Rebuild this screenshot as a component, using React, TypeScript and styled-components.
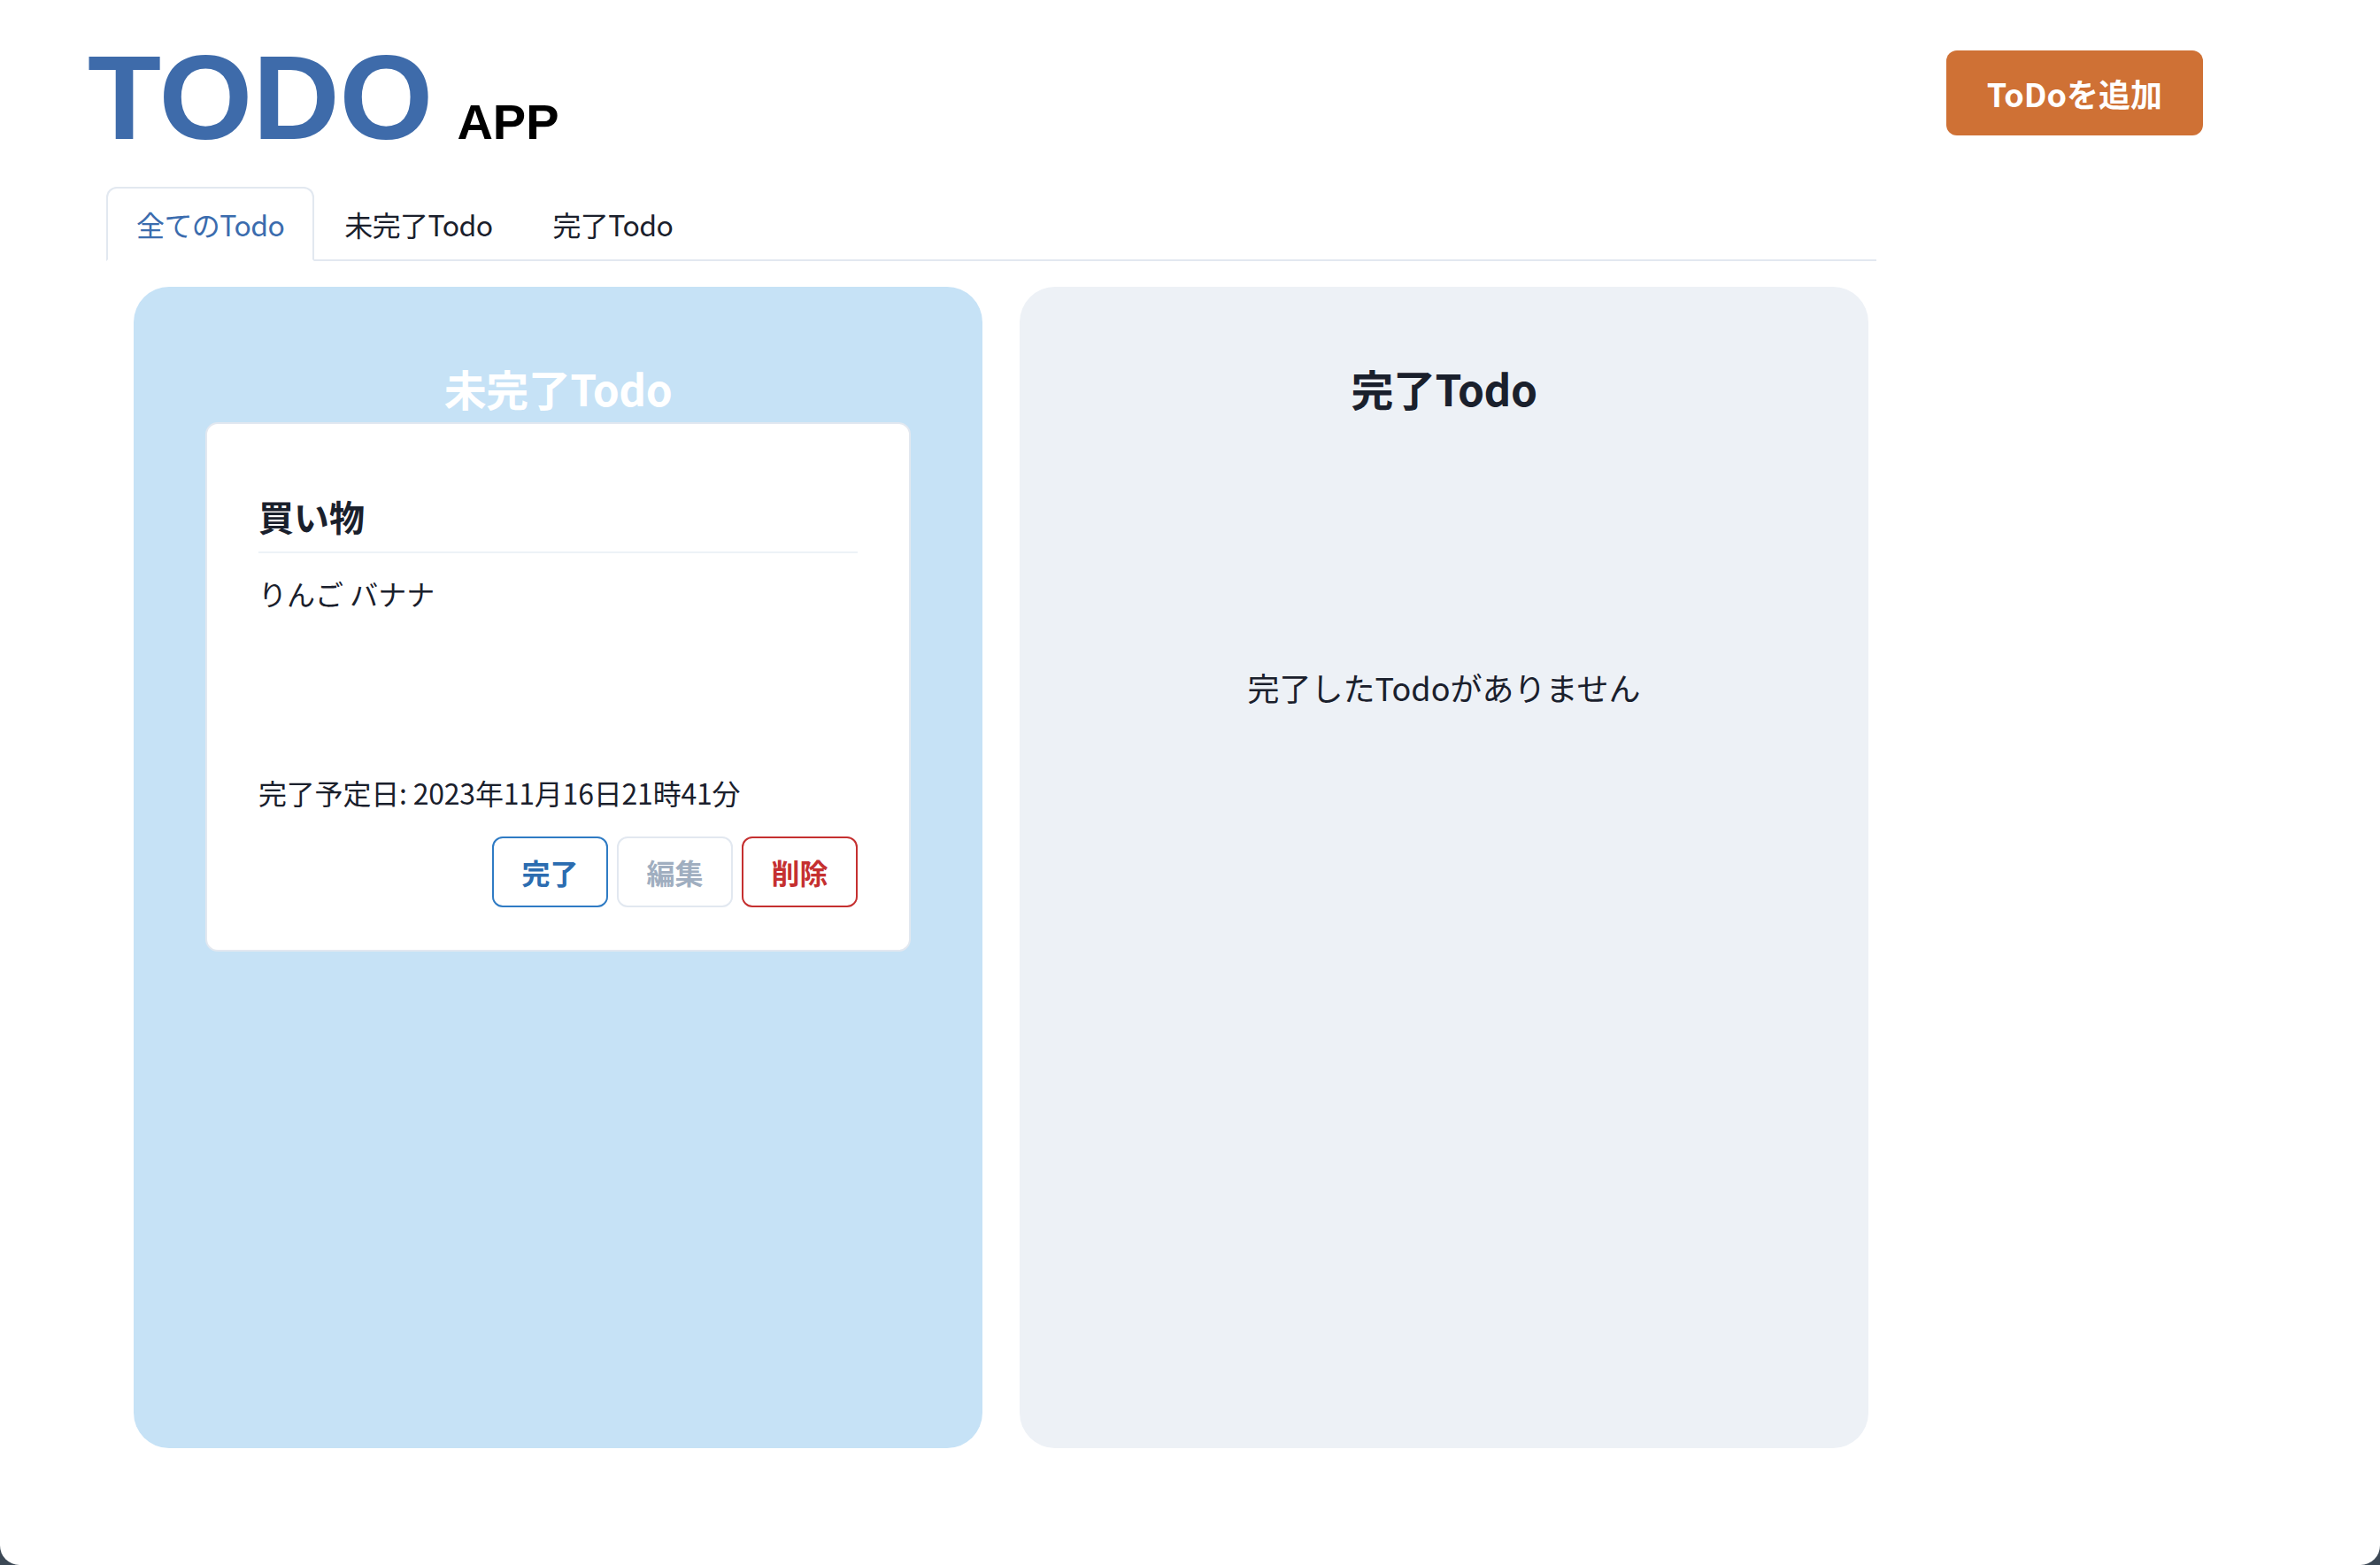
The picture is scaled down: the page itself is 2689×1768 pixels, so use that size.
import React from "react";
import styled, { createGlobalStyle } from "styled-components";

const GlobalStyle = createGlobalStyle`
  html, body {
    margin: 0;
    padding: 0;
    background: #3c4855;
  }
  body {
    font-family: "Noto Sans CJK JP", "Noto Sans", sans-serif;
    color: #1a202c;
  }
  * { box-sizing: border-box; }
`;

const Page = styled.div`
  width: 2689px;
  min-height: 1768px;
  background: #ffffff;
  border-bottom-left-radius: 22px;
  border-bottom-right-radius: 22px;
  padding: 42px 200px 0 99px;
`;

const Header = styled.header`
  display: flex;
  justify-content: space-between;
  align-items: flex-start;
`;

const TitleGroup = styled.div`
  display: flex;
  align-items: baseline;
  gap: 27px;
`;

const Logo = styled.h1`
  margin: 0;
  font-family: "Liberation Sans", Arial, sans-serif;
  font-weight: 700;
  font-size: 136px;
  line-height: 1;
  color: #3e6baa;
`;

const SubLogo = styled.span`
  font-family: "Liberation Sans", Arial, sans-serif;
  font-weight: 700;
  font-size: 56px;
  line-height: 1;
  color: #000000;
`;

const AddButton = styled.button`
  margin-top: 15px;
  height: 96px;
  padding: 0 46px;
  border: none;
  border-radius: 12px;
  background: #cf7135;
  color: #ffffff;
  font-family: "Noto Sans CJK JP", sans-serif;
  font-size: 36px;
  font-weight: 600;
  cursor: pointer;
`;

const Tabs = styled.div`
  margin: 33px 0 0 21px;
  width: 2000px;
`;

const TabList = styled.div`
  display: flex;
  border-bottom: 2px solid #e2e8f0;
`;

const Tab = styled.button<{ $active?: boolean }>`
  margin-bottom: -2px;
  padding: 16px 32px;
  font-family: "Noto Sans CJK JP", sans-serif;
  font-size: 32px;
  line-height: 48px;
  letter-spacing: -0.6px;
  background: ${(p) => (p.$active ? "#ffffff" : "transparent")};
  color: ${(p) => (p.$active ? "#3b6cae" : "#1a202c")};
  border: 2px solid ${(p) => (p.$active ? "#e2e8f0" : "transparent")};
  border-bottom-color: ${(p) => (p.$active ? "#ffffff" : "transparent")};
  border-radius: 12px 12px 0 0;
  cursor: pointer;
`;

const Panels = styled.div`
  display: flex;
  gap: 42px;
  margin-top: 29px;
  padding-left: 31px;
`;

const Panel = styled.section<{ $tone: "blue" | "gray" }>`
  width: 959px;
  height: 1312px;
  flex-shrink: 0;
  border-radius: 40px;
  padding: 86px 81px 0;
  background: ${(p) => (p.$tone === "blue" ? "#c6e2f6" : "#edf1f6")};
  display: flex;
  flex-direction: column;
`;

const PanelHeading = styled.h2<{ $light?: boolean }>`
  margin: 0 0 9px;
  text-align: center;
  font-size: 48px;
  line-height: 1.2;
  font-weight: 700;
  letter-spacing: -0.5px;
  color: ${(p) => (p.$light ? "#ffffff" : "#1a202c")};
`;

const Card = styled.article`
  background: #ffffff;
  border: 2px solid #e2e8f0;
  border-radius: 14px;
  padding: 80px 58px 48px;
  display: flex;
  flex-direction: column;
`;

const CardTitle = styled.h3`
  margin: 0;
  font-size: 40px;
  line-height: 1.2;
  font-weight: 700;
  color: #1a202c;
`;

const Divider = styled.hr`
  margin: 16px 0 0;
  border: none;
  border-top: 2px solid #edf2f7;
`;

const Description = styled.p`
  margin: 21px 0 0;
  min-height: 225px;
  font-size: 32px;
  line-height: 1.5;
`;

const DueDate = styled.p`
  margin: 0;
  font-size: 32px;
  line-height: 1.5;
  letter-spacing: -0.2px;
`;

const Actions = styled.div`
  display: flex;
  justify-content: flex-end;
  gap: 10px;
  margin-top: 26px;
`;

const variants = {
  done: { border: "#2f7bc4", color: "#2b6cb0" },
  edit: { border: "#e2e8f0", color: "#a0aec0" },
  remove: { border: "#c53030", color: "#c53030" },
};

const ActionButton = styled.button<{ $variant: keyof typeof variants }>`
  width: 131px;
  height: 80px;
  padding: 0;
  background: #ffffff;
  border: 2px solid ${(p) => variants[p.$variant].border};
  color: ${(p) => variants[p.$variant].color};
  border-radius: 12px;
  font-family: "Noto Sans CJK JP", sans-serif;
  font-size: 32px;
  font-weight: 700;
  cursor: ${(p) => (p.$variant === "edit" ? "not-allowed" : "pointer")};
`;

const EmptyState = styled.div`
  height: 598px;
  display: flex;
  align-items: center;
  justify-content: center;
  font-size: 36px;
  line-height: 1.5;
  color: #1a202c;
`;

export default function App() {
  return (
    <>
      <GlobalStyle />
      <Page>
        <Header>
          <TitleGroup>
            <Logo>TODO</Logo>
            <SubLogo>APP</SubLogo>
          </TitleGroup>
          <AddButton>ToDoを追加</AddButton>
        </Header>
        <Tabs>
          <TabList>
            <Tab $active>全てのTodo</Tab>
            <Tab>未完了Todo</Tab>
            <Tab>完了Todo</Tab>
          </TabList>
          <Panels>
            <Panel $tone="blue">
              <PanelHeading $light>未完了Todo</PanelHeading>
              <Card>
                <CardTitle>買い物</CardTitle>
                <Divider />
                <Description>りんご バナナ</Description>
                <DueDate>完了予定日: 2023年11月16日21時41分</DueDate>
                <Actions>
                  <ActionButton $variant="done">完了</ActionButton>
                  <ActionButton $variant="edit">編集</ActionButton>
                  <ActionButton $variant="remove">削除</ActionButton>
                </Actions>
              </Card>
            </Panel>
            <Panel $tone="gray">
              <PanelHeading>完了Todo</PanelHeading>
              <EmptyState>完了したTodoがありません</EmptyState>
            </Panel>
          </Panels>
        </Tabs>
      </Page>
    </>
  );
}
